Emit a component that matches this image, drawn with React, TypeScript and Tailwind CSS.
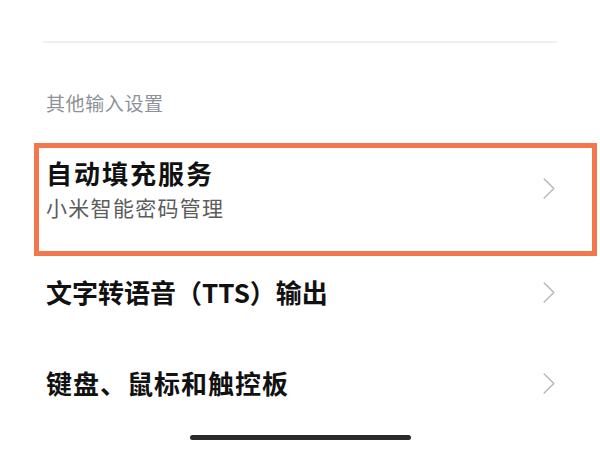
import React from 'react';

const Chevron: React.FC = () => (
    <svg width="12" height="21" viewBox="0 0 12 21" fill="none" className="shrink-0">
        <path d="M1.2 1 L10.8 10.5 L1.2 20" stroke="#b8b8b8" strokeWidth="1.5" strokeLinecap="round" strokeLinejoin="round" />
    </svg>
);

const font = { fontFamily: '"Noto Sans CJK SC", "Noto Sans", sans-serif' };

const App: React.FC = () => {
    return (
        <div className="w-[600px] h-[450px] bg-white overflow-hidden flex flex-col" style={font}>
            <div className="mt-[41px] ml-[43px] mr-[43px] h-[2px] bg-[#efefef]" />

            <p className="mt-[50px] ml-[46px] h-[19px] text-[19px] leading-[19px] tracking-[0.6px] text-[#8d9199]">其他输入设置</p>

            <div className="mt-[31px] ml-[34px] mr-[3px] h-[113px] border-[5px] border-[#f3774c] pt-[11px] pb-[33px] pl-[7px] pr-[37px] flex items-center justify-between">
                <div className="flex flex-col">
                    <span className="h-[26px] text-[26px] leading-[26px] tracking-[2px] font-semibold text-[#111]">自动填充服务</span>
                    <span className="mt-[11px] h-[21px] text-[21px] leading-[21px] tracking-[1.3px] text-[#5c5c5c]">小米智能密码管理</span>
                </div>
                <Chevron />
            </div>

            <div className="mt-[23px] pl-[46px] pr-[45px] h-[26px] flex items-center justify-between">
                <span className="text-[26px] leading-[26px] font-semibold text-[#111]">文字转语音（TTS）输出</span>
                <Chevron />
            </div>

            <div className="mt-[65px] pl-[46px] pr-[45px] h-[26px] flex items-center justify-between">
                <span className="text-[26px] leading-[26px] tracking-[1px] font-semibold text-[#111]">键盘、鼠标和触控板</span>
                <Chevron />
            </div>

            <div className="mt-[39px] self-center w-[221px] h-[5px] rounded-full bg-[#2b2b2b]" />
        </div>
    );
};

export default App;
